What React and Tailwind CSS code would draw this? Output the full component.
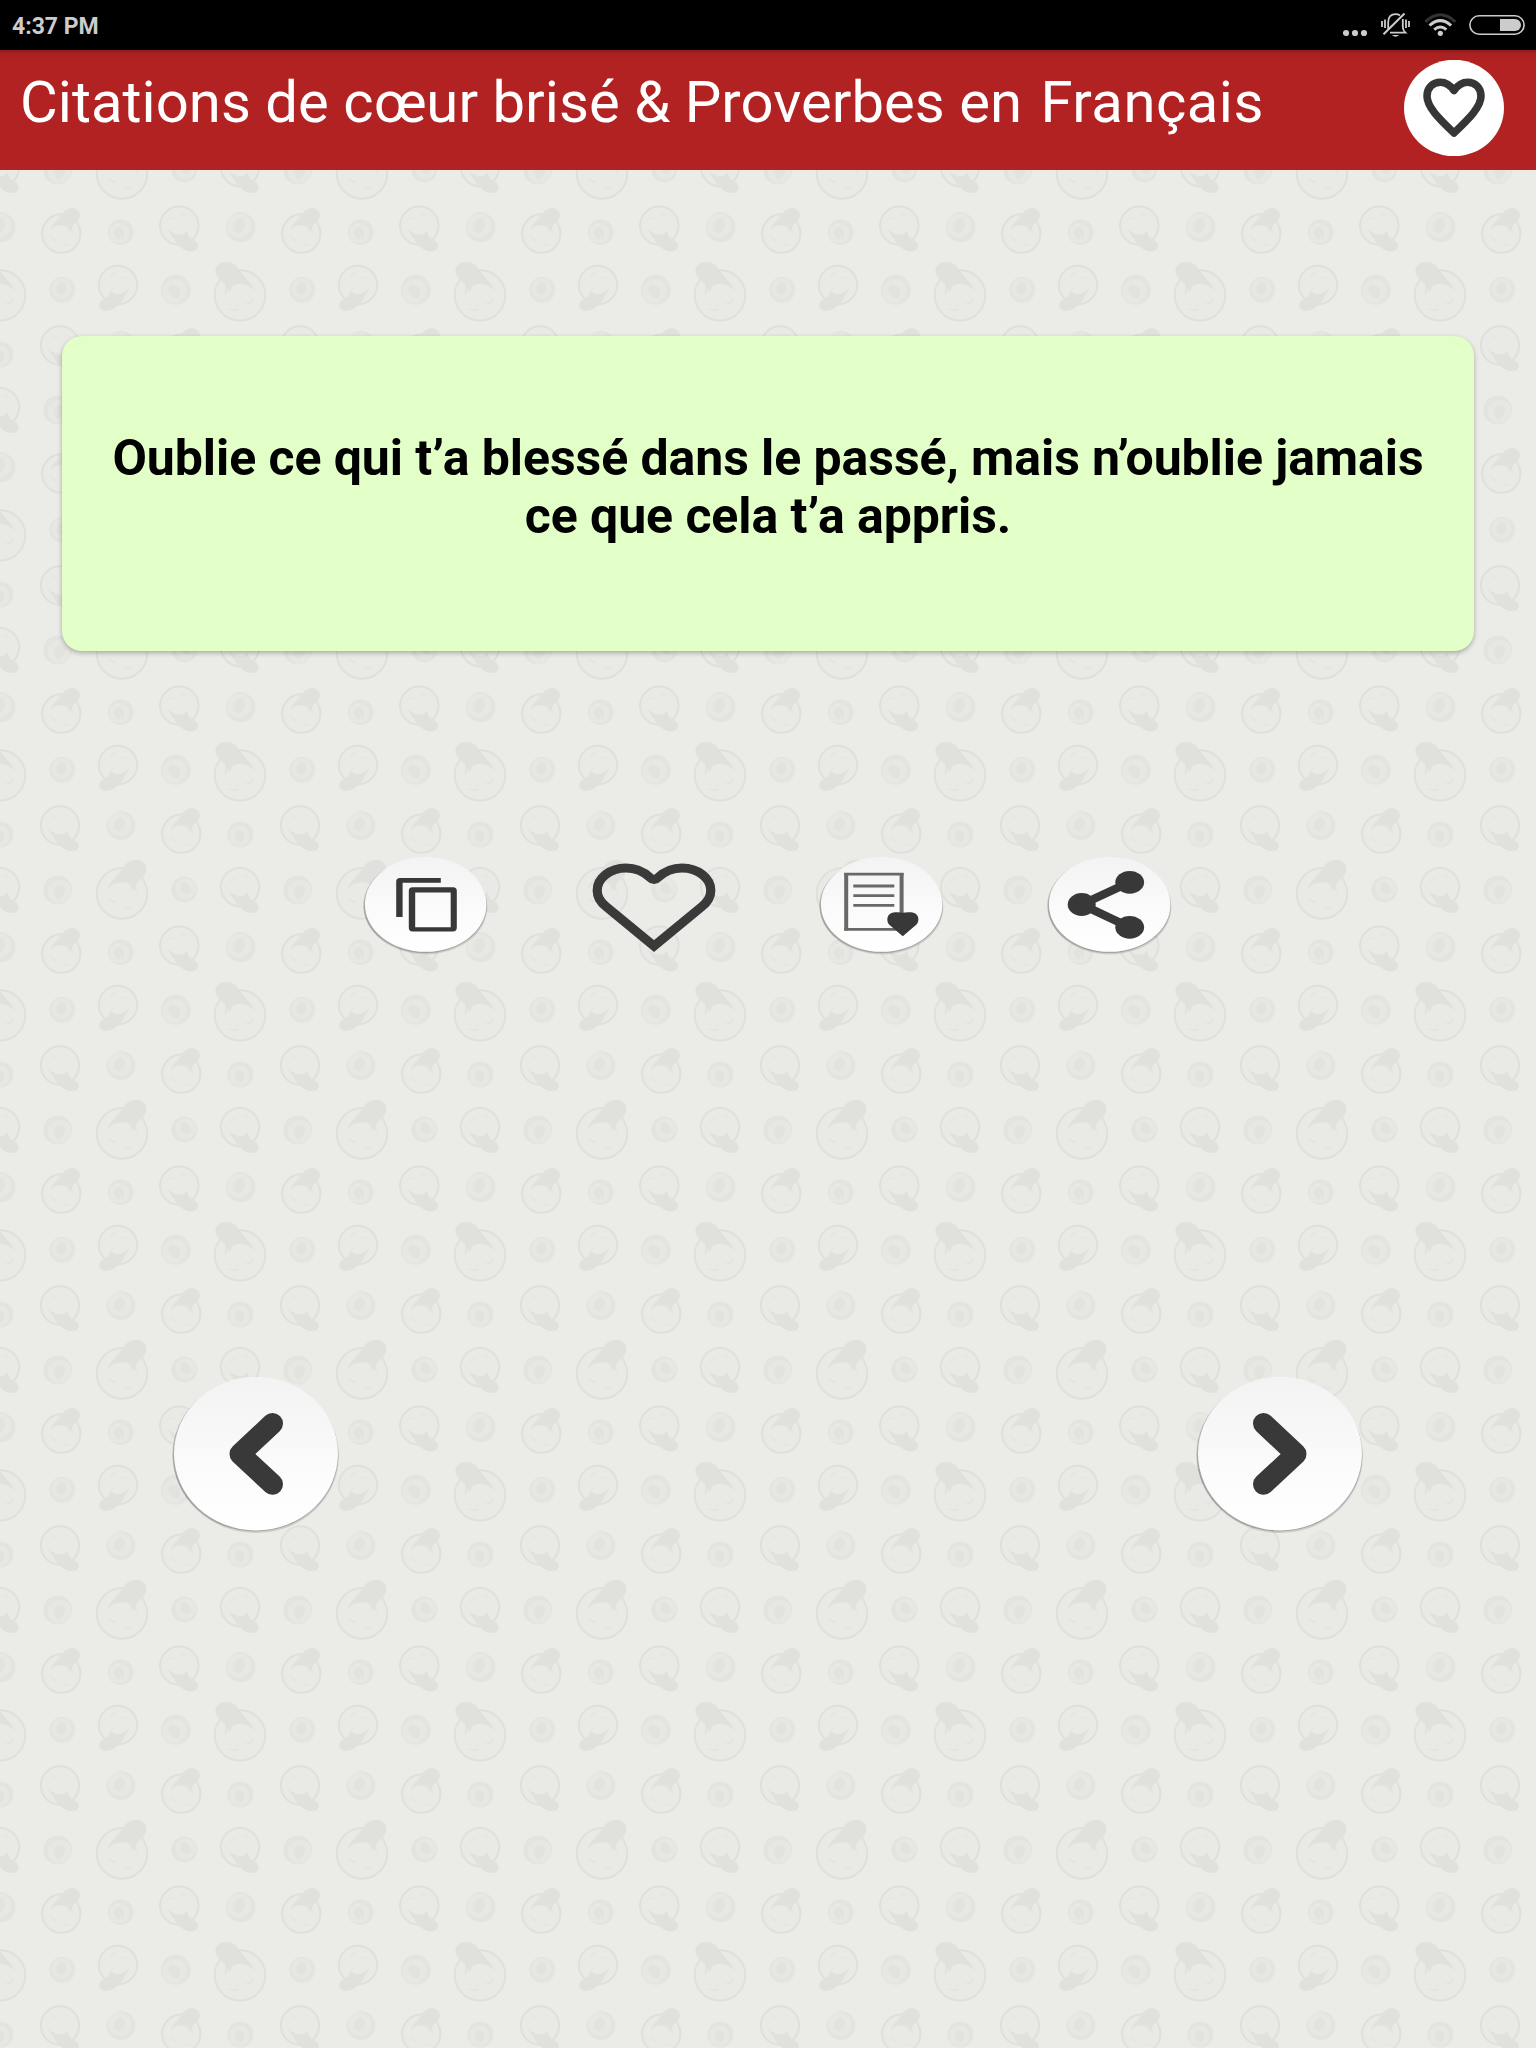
import React from "react";

const QUOTE =
  "Oublie ce qui t’a blessé dans le passé, mais n’oublie jamais ce que cela t’a appris.";

// Position of every doodle inside one 240x240 wallpaper tile
const FACES = [
  { x: 60, y: 105.5, s: 0.76, kind: "down" },
  { x: 181.3, y: 113.8, s: 0.76, kind: "up" },
  { x: 0, y: 167.2, s: 0.76, kind: "down" },
  { x: 122, y: 173.4, s: 1, kind: "up" },
  { x: 61.3, y: 233.6, s: 0.76, kind: "up" },
  { x: 179.3, y: 225.7, s: 0.76, kind: "down" },
  { x: 0, y: 55.3, s: 1, kind: "up", flip: true },
  { x: 118, y: 45, s: 0.76, kind: "down", flip: true },
];

const DOTS = [
  { x: 121, y: 105.5, r: 14.5, dx: -1.5, dy: -1.5 },
  { x: 0.3, y: 114.5, r: 13, dx: -1, dy: 1.3 },
  { x: 57.8, y: 170, r: 14.5, dx: 1.7, dy: 1.7 },
  { x: 184.3, y: 169.5, r: 13, dx: 1.3, dy: -1 },
  { x: 120.6, y: 232.3, r: 13, dx: -1.3, dy: 1 },
  { x: 0.6, y: 227.3, r: 15, dx: -1.6, dy: -1.6 },
  { x: 62.3, y: 49.8, r: 13, dx: -1, dy: -1.2 },
  { x: 175.7, y: 49.8, r: 15, dx: -1.4, dy: 1.4 },
];

const Face = ({ x, y, s, kind, flip }) => (
  <g transform={`translate(${x} ${y}) scale(${flip ? -s : s} ${s})`}>
    <circle r="25.3" fill="#e9eae5" stroke="#dfe0db" strokeWidth={2 / s} />
    {kind === "up" ? (
      <>
        <path
          d="M-15.5 -3.5 C-12 -11 -5 -18 0 -24 C3 -29 6 -33 13 -33.5 C20 -34 25 -29 24.5 -24 C24 -18 19 -15 16 -12 C13 -9 14 -4 17 3 C13 -5 9 -10 3 -11 C-4 -12 -11 -9 -15.5 -3.5Z"
          fill="#e0e1dc"
        />
        <path d="M8 -11 L11 -3" stroke="#e0e1dc" strokeWidth="1.6" />
        <path
          d="M-13 4 Q-12 9 -6 8 M2 13 Q5 17 11 13"
          fill="none"
          stroke="#e3e4df"
          strokeWidth="1.6"
        />
      </>
    ) : (
      <>
        <path
          d="M-15.8 4 C-10 9 -4 12.5 3 12 C7 11 8 9 10.5 6 C10 12 13 16 17 18 C24 21 26.5 26 23.5 30.5 C19 35.5 11 34.5 5 30.5 C1 27.5 -3 24 -6 19 C-9 14 -13 9 -15.8 4Z"
          fill="#e0e1dc"
        />
        <path
          d="M-13 -7 Q-10 -13 -5 -9 M3 -13 Q8 -17 11 -11"
          fill="none"
          stroke="#e4e5e0"
          strokeWidth="1.6"
        />
      </>
    )}
  </g>
);

const Dot = ({ x, y, r, dx, dy }) => (
  <g>
    <circle cx={x} cy={y} r={r} fill="#e3e4df" />
    <circle
      cx={x + dx}
      cy={y + dy}
      r={r - 2.8}
      fill="#e7e8e3"
    />
    <ellipse
      cx={x + dx}
      cy={y + dy}
      rx={r * 0.36}
      ry={r * 0.48}
      fill="#e2e3de"
      transform={`rotate(${dx * dy > 0 ? 18 : -30} ${x + dx} ${y + dy})`}
    />
  </g>
);

const Wallpaper = () => (
  <svg className="absolute inset-0 h-full w-full" aria-hidden="true">
    <defs>
      <g id="doodles">
        {FACES.map((f, i) => (
          <Face key={i} {...f} />
        ))}
        {DOTS.map((d, i) => (
          <Dot key={i} {...d} />
        ))}
      </g>
      <pattern id="tile" width="240" height="240" patternUnits="userSpaceOnUse">
        <use href="#doodles" />
        <use href="#doodles" x="240" />
        <use href="#doodles" y="-240" />
        <use href="#doodles" x="240" y="-240" />
      </pattern>
    </defs>
    <rect width="100%" height="100%" fill="#ebece7" />
    <rect width="100%" height="100%" fill="url(#tile)" />
  </svg>
);

const StatusBar = () => (
  <div className="flex h-[50px] items-center justify-between bg-black pl-3 pr-[10px]">
    <span className="mt-[2px] text-[23px] leading-none font-bold text-[#cccccc]">
      4:37 PM
    </span>
    <div className="flex items-center text-[#cccccc]">
      <svg width="38" height="50" viewBox="1343 0 38 50" fill="currentColor">
        <circle cx="1346" cy="33" r="3.1" />
        <circle cx="1355" cy="33" r="3.1" />
        <circle cx="1364" cy="33" r="3.1" />
      </svg>
      <svg
        width="43"
        height="50"
        viewBox="1381 0 43 50"
        fill="none"
        stroke="currentColor"
        strokeWidth="1.8"
      >
        <path d="M1382 21V27 M1385 19.5V28 M1406 19.5V28 M1409 21V27" />
        <path d="M1388.2 29V22C1388.2 17 1391 14.2 1395.5 14.2C1397.2 14.2 1398.8 14.6 1400 15.4" />
        <path d="M1402.8 19V27C1402.8 29.5 1403.6 31 1405.4 32.6H1390" />
        <path d="M1404.5 13.5L1383.5 34.3" strokeWidth="2" />
        <path d="M1392 35H1399Q1395.5 38.5 1392 35Z" fill="currentColor" stroke="none" />
      </svg>
      <svg width="45" height="50" viewBox="1424 0 45 50" fill="none" stroke="currentColor">
        <path d="M1425.3 21.8Q1440.3 7.8 1455.3 21.8" stroke="#333333" strokeWidth="3" />
        <path d="M1429.5 25.5Q1440.3 15.7 1451.1 25.5" strokeWidth="3" />
        <path d="M1434.2 29.6Q1440.3 24.4 1446.4 29.6" strokeWidth="3" />
        <circle cx="1440.3" cy="33.3" r="2.6" fill="currentColor" stroke="none" />
      </svg>
      <svg width="57" height="50" viewBox="1469 0 57 50">
        <rect
          x="1469.9"
          y="15.8"
          width="54.2"
          height="18.4"
          rx="9.2"
          fill="none"
          stroke="currentColor"
          strokeWidth="1.6"
        />
        <path d="M1500 19H1515A6 6 0 0 1 1515 31H1500Z" fill="currentColor" />
      </svg>
    </div>
  </div>
);

const Header = () => (
  <header className="relative flex h-[120px] justify-between bg-[#b22222] pr-8 pl-5">
    <div className="absolute inset-x-0 top-0 h-[14px] bg-linear-to-b from-black/20 via-black/5 via-25% to-transparent" />
    <h1 className="mt-[18px] text-[58px] leading-[68px] tracking-[0.04px] whitespace-nowrap text-white">
      Citations de cœur brisé &amp; Proverbes en{" "}
      <span className="ml-[4px] tracking-[0.5px]">Français</span>
    </h1>
    <button type="button" className="mt-[10px] h-24 w-[100px]">
      <svg width="100" height="96" viewBox="0 0 100 96">
        <ellipse cx="50" cy="48" rx="50" ry="48.3" fill="#ffffff" />
        <path
          d="M50 30.5C46 25 41.5 22.3 36.5 22.3C28.5 22.3 23 28 23 36C23 47 35 58.5 50 73C65 58.5 77 47 77 36C77 28 71.5 22.3 63.5 22.3C58.5 22.3 54 25 50 30.5Z"
          fill="none"
          stroke="#363636"
          strokeWidth="7.6"
          strokeLinejoin="round"
        />
      </svg>
    </button>
  </header>
);

// White disc shared by the action and navigation buttons
const Disc = ({ cx, cy, rx, ry }) => (
  <>
    <ellipse cx={cx} cy={cy + 2.6} rx={rx + 0.9} ry={ry} fill="#000000" opacity="0.12" />
    <ellipse cx={cx - 0.6} cy={cy + 1.2} rx={rx + 1} ry={ry} fill="#000000" opacity="0.2" />
    <ellipse cx={cx} cy={cy} rx={rx} ry={ry} fill="url(#disc)" />
  </>
);

const ActionButton = ({ children, plain }) => (
  <button type="button" className="h-[98px] w-32">
    <svg width="128" height="98" viewBox="0 0 128 98">
      {!plain && <Disc cx={63.7} cy={47.4} rx={60.8} ry={47.4} />}
      {children}
    </svg>
  </button>
);

const Actions = () => (
  <div className="mt-[206px] flex justify-center gap-[100px]">
    <ActionButton>
      <path
        d="M34.2 59.9V24.5Q34.2 21 38 21H78.8V25.8H40.6V59.9Z"
        fill="#383838"
      />
      <path
        fillRule="evenodd"
        d="M50.5 30.3H91Q94.8 30.3 94.8 34V70.8Q94.8 74.4 91 74.4H50.5Q46.8 74.4 46.8 70.8V34Q46.8 30.3 50.5 30.3ZM53.2 35.4V70.3H88.7V35.4Z"
        fill="#383838"
      />
    </ActionButton>
    <ActionButton plain>
      <path
        d="M60 20.5Q64 24.5 68 20.5C75 14 82 11 92 11C108 11 120.8 21 120.8 33.5C120.8 40 117 45.5 112 49.5L64 89L16 49.5C11 45.5 7.2 40 7.2 33.5C7.2 21 20 11 36 11C46 11 53 14 60 20.5Z"
        fill="none"
        stroke="#3a3a3a"
        strokeWidth="9.2"
      />
    </ActionButton>
    <ActionButton>
      <path d="M28.2 16V73.5M83.6 16V73.5" stroke="#686868" strokeWidth="4" />
      <path d="M26.2 17.2H85.6M26.2 72.4H85.6" stroke="#686868" strokeWidth="2.7" />
      <path
        d="M35.3 29H76.3M35.3 38.7H76.3M35.3 48.4H76.3"
        stroke="#686868"
        strokeWidth="2.8"
      />
      <path
        d="M84.8 79.3L71 67.5C68 64 68.5 55.3 77 55.3Q82 55 84.8 55.8Q88 55 93 55.3C101 55.3 102 64 98.5 67.5Z"
        fill="#383838"
      />
    </ActionButton>
    <ActionButton>
      <path
        d="M83.7 25.3L35.7 47.5L83.7 70.3"
        fill="none"
        stroke="#383838"
        strokeWidth="8.4"
      />
      <ellipse cx="35.7" cy="47.5" rx="14" ry="11.4" fill="#383838" />
      <ellipse cx="83.7" cy="25.3" rx="14.4" ry="11.4" fill="#383838" />
      <ellipse cx="83.7" cy="70.3" rx="14.4" ry="11.4" fill="#383838" />
    </ActionButton>
  </div>
);

const NavButton = ({ d }) => (
  <button type="button" className="h-[160px] w-[170px]">
    <svg width="170" height="160" viewBox="0 0 170 160">
      <Disc cx={85} cy={76.6} rx={82} ry={76.8} />
      <path
        d={d}
        fill="none"
        stroke="#393939"
        strokeWidth="21"
        strokeLinecap="round"
        strokeLinejoin="round"
      />
    </svg>
  </button>
);

const App = () => {
  return (
    <div className="relative h-[2048px] w-[1536px] overflow-hidden font-[Roboto,sans-serif]">
      <Wallpaper />
      <svg width="0" height="0" className="absolute">
        <defs>
          <linearGradient id="disc" x1="0" y1="0" x2="0" y2="1">
            <stop offset="0" stopColor="#f3f3f3" />
            <stop offset="0.6" stopColor="#fbfbfb" />
            <stop offset="1" stopColor="#ffffff" />
          </linearGradient>
        </defs>
      </svg>

      <div className="relative flex flex-col">
        <StatusBar />
        <Header />

        {/* Quote card */}
        <main className="mx-[62px] mt-[166px] h-[315px] rounded-[20px] bg-[#e1ffc7] px-10 pt-[93px] shadow-[0_2px_5px_rgba(0,0,0,0.28)]">
          <p className="text-center text-[50px] leading-[58px] font-bold tracking-[-0.07px] text-black">
            {QUOTE}
          </p>
        </main>

        <Actions />

        {/* Previous / next */}
        <nav className="mt-[422px] grid grid-cols-3 justify-items-center">
          <NavButton d="M101.5 46.5L69 77L101.5 107.3" />
          <span />
          <NavButton d="M68.5 46.5L101 77L68.5 107.3" />
        </nav>
      </div>
    </div>
  );
};

export default App;
